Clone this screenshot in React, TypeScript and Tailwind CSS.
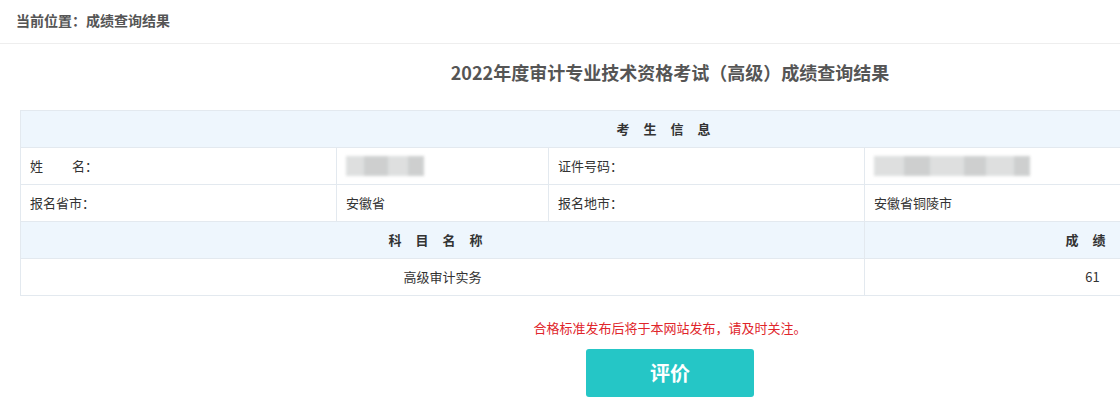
const cell = "border border-[#e3e9ef] h-[37px] px-[9px] text-[13px] text-[#333]";
const head = "border border-[#e3e9ef] h-[37px] bg-[#eef6fd] text-[13px] font-bold text-[#333] text-center";

const Blur = ({ widths }: { widths: number[] }) => (
  <div className="flex h-[20px] items-center opacity-80 blur-[1.5px]">
    {widths.map((w, i) => (
      <div
        key={i}
        className={i % 2 === 0 ? "h-[20px] bg-[#d6d8d8]" : "h-[20px] bg-[#c2c4c4]"}
        style={{ width: w }}
      />
    ))}
  </div>
);

export default function App() {
  return (
    <div
      className="h-[408px] w-full overflow-hidden bg-white"
      style={{ fontFamily: '"Noto Sans CJK SC", "Noto Sans", sans-serif' }}
    >
      <div className="w-[1340px]">
        <div className="flex h-[44px] items-center border-b border-[#eeeeee] px-[16px] pb-[2px]">
          <span className="text-[14px] font-bold text-[#555]">当前位置：成绩查询结果</span>
        </div>
        <h1 className="pt-[15px] text-center text-[18px] font-bold leading-[26px] text-[#555]">
          2022年度审计专业技术资格考试（高级）成绩查询结果
        </h1>
        <div className="px-[20px] pt-[25px]">
          <table className="w-[1300px] table-fixed border-collapse">
            <colgroup>
              <col className="w-[316px]" />
              <col className="w-[212px]" />
              <col className="w-[316px]" />
              <col className="w-[456px]" />
            </colgroup>
            <tbody>
              <tr>
                <td colSpan={4} className={head}>
                  <span className="tracking-[14px]">考生信息</span>
                </td>
              </tr>
              <tr>
                <td className={cell}>
                  <span className="whitespace-pre">姓          名：</span>
                </td>
                <td className={cell}>
                  <Blur widths={[18, 24, 20, 16]} />
                </td>
                <td className={cell}>证件号码：</td>
                <td className={cell}>
                  <Blur widths={[30, 26, 34, 22, 28, 16]} />
                </td>
              </tr>
              <tr>
                <td className={cell}>报名省市：</td>
                <td className={cell}>安徽省</td>
                <td className={cell}>报名地市：</td>
                <td className={cell}>安徽省铜陵市</td>
              </tr>
              <tr>
                <td colSpan={3} className={head}>
                  <span className="tracking-[14px]">科目名称</span>
                </td>
                <td className={head}>
                  <span className="tracking-[14px]">成绩</span>
                </td>
              </tr>
              <tr>
                <td colSpan={3} className={`${cell} text-center`}>高级审计实务</td>
                <td className={`${cell} text-center`}>61</td>
              </tr>
            </tbody>
          </table>
        </div>
        <p className="pt-[22px] text-center text-[13px] leading-[20px] text-[#e0252b]">
          合格标准发布后将于本网站发布，请及时关注。
        </p>
        <div className="flex justify-center pt-[11px]">
          <button className="h-[48px] w-[168px] rounded-[3px] bg-[#25c6c6] text-[20px] font-bold text-white">
            评价
          </button>
        </div>
      </div>
    </div>
  );
}
